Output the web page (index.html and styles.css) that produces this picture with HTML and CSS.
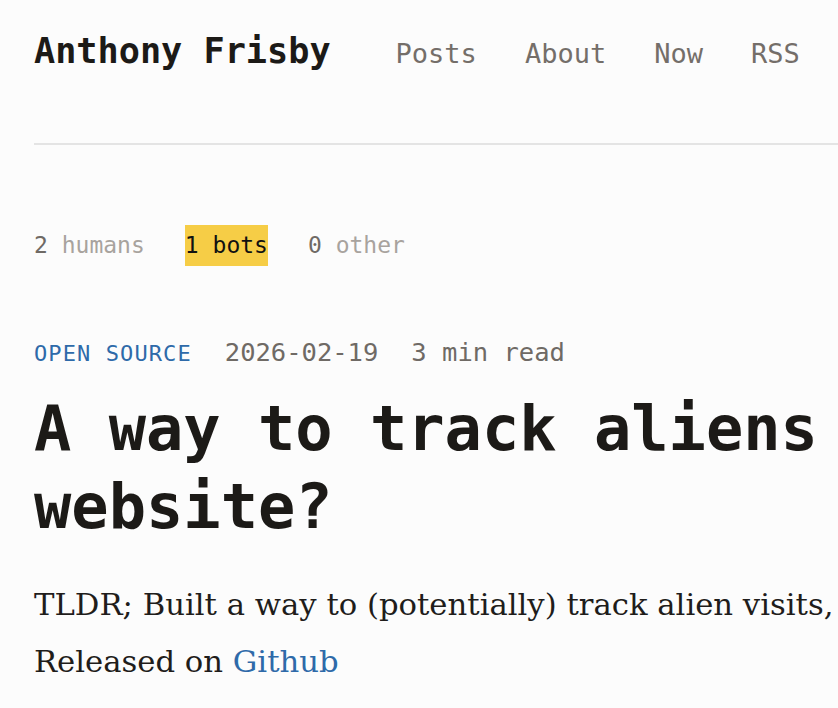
FILE: index.html
```html
<!DOCTYPE html>
<html lang="en">
<head>
<meta charset="utf-8">
<title>Anthony Frisby</title>
<link rel="stylesheet" href="styles.css">
</head>
<body>
<div class="page">
  <header class="site-header">
    <a class="site-title" href="#">Anthony Frisby</a>
    <nav class="site-nav">
      <a href="#">Posts</a>
      <a href="#">About</a>
      <a href="#">Now</a>
      <a href="#">RSS</a>
    </nav>
  </header>

  <div class="visitors">
    <span class="visitor"><span class="count">2</span> <span class="label">humans</span></span>
    <span class="visitor active"><span class="count">1</span> <span class="label">bots</span></span>
    <span class="visitor"><span class="count">0</span> <span class="label">other</span></span>
  </div>

  <article class="post">
    <div class="post-meta">
      <a class="category" href="#">OPEN SOURCE</a>
      <span class="date">2026-02-19</span>
      <span class="read">3 min read</span>
    </div>
    <h1 class="post-title">A way to track aliens visiting my<br>website?</h1>
    <p class="post-body">TLDR; Built a way to (potentially) track alien visits, and</p>
    <p class="post-body">Released on <a href="#">Github</a></p>
  </article>
</div>
</body>
</html>
```

FILE: styles.css
```css
html, body {
  margin: 0;
  padding: 0;
  background: #fcfcfc;
  overflow: hidden;
}

.page {
  width: 1200px;
  padding: 30px 0 0 34px;
  font-family: "DejaVu Sans Mono", monospace;
  color: #1c1a17;
}

a {
  text-decoration: none;
  color: inherit;
}

.site-header {
  display: flex;
  align-items: baseline;
  gap: 65px;
  padding-bottom: 71px;
  border-bottom: 2px solid #e4e4e4;
}

.site-title {
  font-size: 35.2px;
  line-height: 42px;
  font-weight: bold;
  color: #1c1a17;
}

.site-nav {
  display: flex;
  gap: 48px;
  font-size: 27px;
  line-height: 32px;
}

.site-nav a {
  color: #746e69;
}

.visitors {
  display: flex;
  gap: 40px;
  margin-top: 80px;
  font-size: 23px;
  line-height: 41px;
}

.visitor .count {
  color: #6f6a65;
}

.visitor .label {
  color: #a8a39e;
}

.visitor.active {
  background: #f6cd46;
}

.visitor.active .count,
.visitor.active .label {
  color: #111111;
}

.post {
  margin-top: 67px;
}

.post-meta {
  display: flex;
  align-items: baseline;
  gap: 33px;
  font-size: 25.5px;
  line-height: 38px;
  color: #6f6a65;
}

.category {
  font-size: 22px;
  letter-spacing: 1.1px;
  color: #2e6aa9;
}

.post-title {
  margin: 17px 0 0;
  font-size: 62px;
  line-height: 77.5px;
  font-weight: bold;
  color: #1c1a17;
  white-space: nowrap;
}

.post-body {
  margin: 0;
  font-family: "DejaVu Serif", serif;
  font-size: 30.7px;
  line-height: 57px;
  color: #1f1d1b;
  white-space: nowrap;
}

.post-title + .post-body {
  margin-top: 31px;
}

.post-body a {
  color: #2e6aa9;
}
```
